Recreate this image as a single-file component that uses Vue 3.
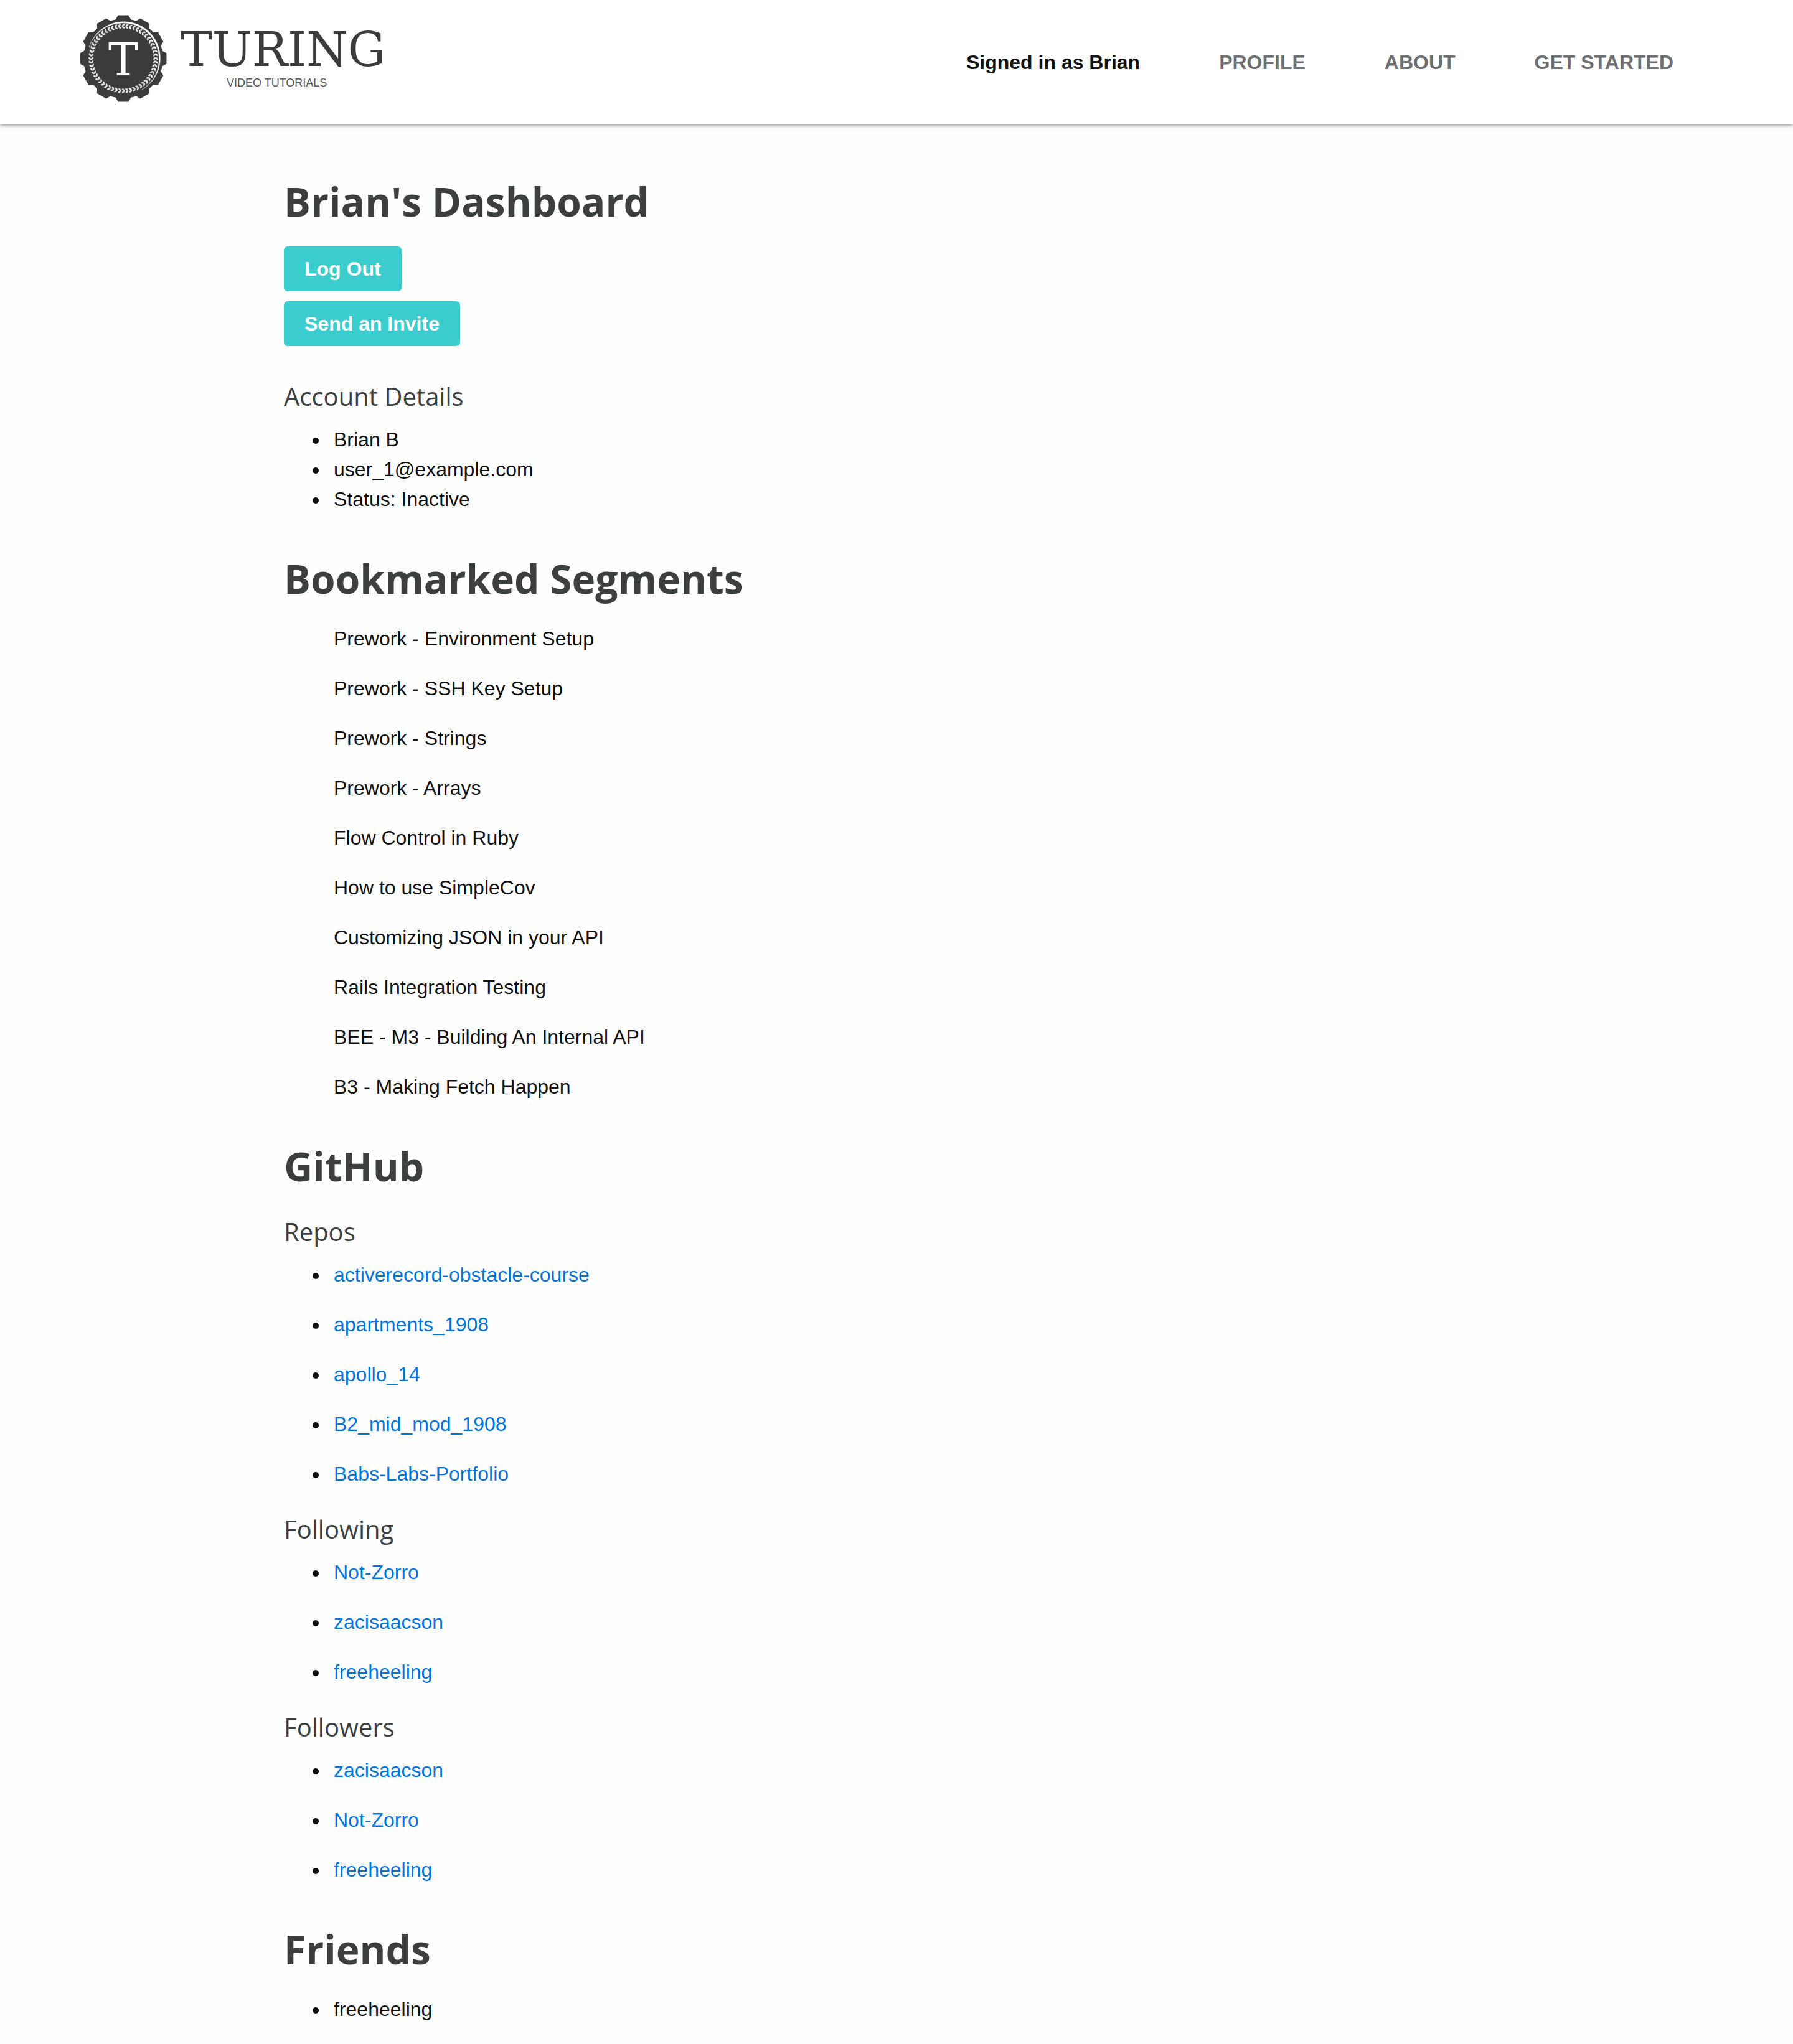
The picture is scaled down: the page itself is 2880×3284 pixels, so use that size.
<script setup>
const navLinks = ['PROFILE', 'ABOUT', 'GET STARTED']

const account = ['Brian B', 'user_1@example.com', 'Status: Inactive']

const bookmarks = [
  'Prework - Environment Setup',
  'Prework - SSH Key Setup',
  'Prework - Strings',
  'Prework - Arrays',
  'Flow Control in Ruby',
  'How to use SimpleCov',
  'Customizing JSON in your API',
  'Rails Integration Testing',
  'BEE - M3 - Building An Internal API',
  'B3 - Making Fetch Happen',
]

const github = [
  {
    title: 'Repos',
    links: [
      'activerecord-obstacle-course',
      'apartments_1908',
      'apollo_14',
      'B2_mid_mod_1908',
      'Babs-Labs-Portfolio',
    ],
  },
  { title: 'Following', links: ['Not-Zorro', 'zacisaacson', 'freeheeling'] },
  { title: 'Followers', links: ['zacisaacson', 'Not-Zorro', 'freeheeling'] },
]

const friends = ['freeheeling']

// Seal outline: twelve flat-topped teeth around the rim.
const polar = (deg, r) => {
  const a = (deg * Math.PI) / 180
  return `${(Math.sin(a) * r).toFixed(2)},${(-Math.cos(a) * r).toFixed(2)}`
}
const sealPoints = Array.from({ length: 12 }, (_, i) => {
  const c = i * 30
  return [polar(c - 7, 70), polar(c + 7, 70), polar(c + 11, 64), polar(c + 19, 64)].join(' ')
}).join(' ')

const leafCount = 56
</script>

<template>
  <div class="page">
    <header class="site-header">
      <a href="#" class="brand">
        <svg class="seal" viewBox="-70 -70 140 140" aria-hidden="true">
          <polygon :points="sealPoints" fill="#3b3c3e" />
          <path
            d="M-55 -18 A58.5 58.5 0 1 1 30 50 A57.8 57.8 0 1 0 -55 -18 Z"
            fill="#fff"
            stroke="#fff"
            stroke-width="0.4"
          />
          <g v-for="n in leafCount" :key="n" :transform="`rotate(${(n * 360) / leafCount})`">
            <path
              d="M2 -55.5 Q-2 -55.5 -2 -52 Q1.5 -52 2 -55.5 Z M-2 -52 Q-2 -48.5 2 -48.5 Q1.5 -52 -2 -52 Z"
              fill="#e6e6e6"
              stroke="#e6e6e6"
              stroke-width="0.7"
            />
          </g>
          <text x="0" y="27" text-anchor="middle" class="seal-letter">T</text>
        </svg>
        <span class="wordmark">
          <span class="name">TURING</span>
          <span class="tagline">VIDEO TUTORIALS</span>
        </span>
      </a>
      <nav class="nav">
        <span class="signed-in">Signed in as Brian</span>
        <a v-for="link in navLinks" :key="link" href="#">{{ link }}</a>
      </nav>
    </header>

    <main class="content">
      <section>
        <h1>Brian's Dashboard</h1>
        <div class="actions">
          <button type="button">Log Out</button>
          <button type="button">Send an Invite</button>
        </div>
        <h2>Account Details</h2>
        <ul>
          <li v-for="item in account" :key="item">{{ item }}</li>
        </ul>
      </section>

      <section>
        <h1>Bookmarked Segments</h1>
        <ul class="spaced plain">
          <li v-for="item in bookmarks" :key="item">{{ item }}</li>
        </ul>
      </section>

      <section>
        <h1>GitHub</h1>
        <div v-for="group in github" :key="group.title" class="group">
          <h2>{{ group.title }}</h2>
          <ul class="spaced">
            <li v-for="link in group.links" :key="link"><a href="#">{{ link }}</a></li>
          </ul>
        </div>
      </section>

      <section>
        <h1>Friends</h1>
        <ul>
          <li v-for="item in friends" :key="item">{{ item }}</li>
        </ul>
      </section>
    </main>
  </div>
</template>

<style>
body {
  margin: 0;
  background: #fefefe;
}
</style>

<style scoped>
.page {
  color: #111;
  font: 32px/48px "Liberation Sans", Arial, sans-serif;
}

.site-header {
  display: flex;
  justify-content: space-between;
  align-items: flex-start;
  box-sizing: border-box;
  height: 200px;
  padding: 24px 192px 0 128px;
  background: #fff;
  box-shadow: 0 1px 6px rgba(0, 0, 0, 0.5);
}

.brand {
  display: flex;
  color: #3b3c3e;
  text-decoration: none;
}

.seal {
  display: block;
  width: 140px;
  height: 140px;
}

.seal-letter {
  fill: #fff;
  font-family: "DejaVu Serif", serif;
  font-size: 72px;
}

.wordmark {
  display: flex;
  flex-direction: column;
  padding: 16px 0 0 22px;
}

.name {
  font: 76px/80px "DejaVu Serif", serif;
}

.tagline {
  padding-left: 74px;
  color: #58595b;
  font-size: 18px;
  line-height: 26px;
}

.nav {
  display: flex;
  gap: 127px;
  padding-top: 52px;
  font-weight: bold;
}

.nav a {
  color: #6d6e70;
  text-decoration: none;
}

.content {
  display: flex;
  flex-direction: column;
  gap: 66px;
  box-sizing: border-box;
  max-width: 1968px;
  margin: 0 auto;
  padding: 86px 0 32px;
}

h1,
h2 {
  margin: 0;
  color: #3c3f40;
  font-family: "Open Sans", sans-serif;
}

h1 {
  margin-bottom: 34px;
  font-size: 64px;
  line-height: 76px;
  font-weight: bold;
}

h2 {
  margin-bottom: 22px;
  font-size: 40px;
  line-height: 46px;
  font-weight: normal;
}

.actions {
  display: flex;
  flex-direction: column;
  align-items: flex-start;
  gap: 16px;
  margin-bottom: 58px;
}

button {
  padding: 12px 33px;
  border: 0;
  border-radius: 6px;
  background: #3bcccd;
  color: #fff;
  font: bold 32px/48px "Liberation Sans", Arial, sans-serif;
}

ul {
  margin: 0;
  padding: 0 0 0 72px;
}

li {
  padding-left: 8px;
}

.spaced li + li {
  margin-top: 32px;
}

.plain {
  list-style: none;
}

.group {
  padding-top: 10px;
}

.group + .group {
  padding-top: 42px;
}

li a {
  color: #0074d9;
  text-decoration: none;
}
</style>
